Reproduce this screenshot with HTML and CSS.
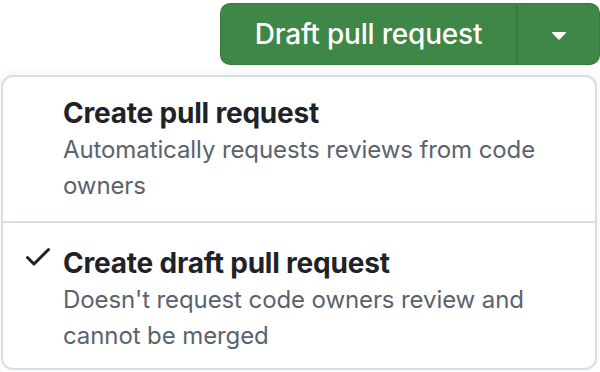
FILE: index.html
```html
<!DOCTYPE html>
<html lang="en">
<head>
  <meta charset="UTF-8">
  <title>Draft pull request</title>
  <link rel="stylesheet" href="styles.css">
</head>
<body>
  <div class="page">

    <div class="btn-group">
      <button class="btn btn-main">Draft pull request</button>
      <button class="btn btn-caret" aria-label="Select type">
        <svg viewBox="0 0 16 16" width="32" height="32"><path fill="currentColor" d="m4.427 7.427 3.396 3.396a.25.25 0 0 0 .354 0l3.396-3.396A.25.25 0 0 0 11.396 7H4.604a.25.25 0 0 0-.177.427Z"></path></svg>
      </button>
    </div>

    <div class="menu">
      <div class="menu-item">
        <div class="check"></div>
        <div class="item-text">
          <div class="item-title">Create pull request</div>
          <div class="item-desc">Automatically requests reviews from code owners</div>
        </div>
      </div>
      <div class="menu-item">
        <div class="check">
          <svg viewBox="0 0 16 16" width="32" height="32"><path fill="currentColor" d="M13.78 4.22a.75.75 0 0 1 0 1.060l-7.25 7.25a.75.75 0 0 1-1.060 0L2.22 9.28a.751.751 0 0 1 .018-1.042.751.751 0 0 1 1.042-.018L6 10.94l6.72-6.72a.75.75 0 0 1 1.060 0Z"></path></svg>
        </div>
        <div class="item-text">
          <div class="item-title">Create draft pull request</div>
          <div class="item-desc">Doesn't request code owners review and cannot be merged</div>
        </div>
      </div>
    </div>

  </div>
</body>
</html>
```

FILE: styles.css
```css
body {
  margin: 0;
  background-color: #ffffff;
  font-family: Inter, "Noto Sans", sans-serif;
  color: #1f2328;
}

.page {
  width: 600px;
  height: 372px;
  padding: 3px 1px 0 1px;
  box-sizing: border-box;
  display: flex;
  flex-direction: column;
}

.btn-group {
  display: flex;
  align-self: flex-end;
  flex-shrink: 0;
  margin-right: -1px;
  height: 62px;
}

.btn {
  font-family: Inter, "Noto Sans", sans-serif;
  background-color: #3e8746;
  color: #ffffff;
  border: 1px solid #387b3f;
  margin: 0;
  cursor: pointer;
}

.btn-main {
  width: 298px;
  font-size: 28px;
  font-weight: 500;
  border-radius: 10px 0 0 10px;
  border-right: 2px solid #367a3d;
  letter-spacing: -0.2px;
  padding: 0;
}

.btn-caret {
  width: 82px;
  border-left: none;
  border-radius: 0 10px 10px 0;
  display: flex;
  align-items: center;
  justify-content: center;
  padding: 0;
}

.menu {
  margin-top: 10px;
  width: 596px;
  flex-shrink: 0;
  border: 2px solid #d8dee4;
  border-radius: 12px;
  box-sizing: border-box;
  box-shadow: 0 -2px 8px rgba(140, 149, 159, 0.12);
  background-color: #ffffff;
}

.menu-item {
  display: flex;
  padding: 17px 19px 17px 19px;
}

.menu-item + .menu-item {
  border-top: 2px solid #d8dee4;
  padding-top: 21px;
  padding-bottom: 14px;
}

.check {
  width: 32px;
  height: 32px;
  flex-shrink: 0;
  margin-right: 9px;
  margin-top: -4px;
  color: #1f2328;
}

.item-title {
  font-size: 28px;
  font-weight: 700;
  line-height: 38px;
  letter-spacing: -0.2px;
}

.item-desc {
  font-size: 24px;
  line-height: 36px;
  color: #59636e;
  letter-spacing: -0.1px;
}
```
